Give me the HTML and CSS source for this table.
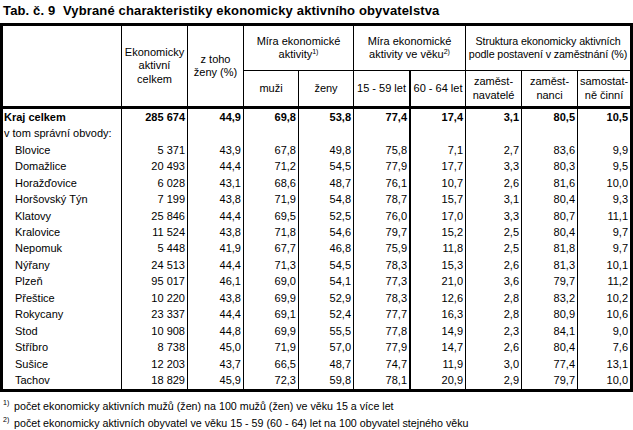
FILE: index.html
```html
<!DOCTYPE html>
<html lang="cs">
<head>
<meta charset="utf-8">
<link rel="stylesheet" href="styles.css">
</head>
<body>
<div class="title">Tab. č. 9&nbsp; Vybrané charakteristiky ekonomicky aktivního obyvatelstva</div>
<table class="tab">
  <colgroup>
    <col class="w0"><col class="w1"><col class="w2"><col class="w3"><col class="w4">
    <col class="w5"><col class="w6"><col class="w7"><col class="w8"><col class="w9">
  </colgroup>
  <thead>
    <tr class="hr1">
      <th rowspan="2" class="hb"></th>
      <th rowspan="2" class="hb">Ekonomicky<br>aktivní<br>celkem</th>
      <th rowspan="2" class="hb">z toho<br>ženy (%)</th>
      <th colspan="2">Míra ekonomické<br>aktivity<sup class="fn">1)</sup></th>
      <th colspan="2">Míra ekonomické<br>aktivity ve věku<sup class="fn">2)</sup></th>
      <th colspan="3" class="last tight">Struktura ekonomicky aktivních<br>podle postavení v zaměstnání (%)</th>
    </tr>
    <tr class="hr2">
      <th class="hb">muži</th>
      <th class="hb">ženy</th>
      <th class="hb thick">15 - 59 let</th>
      <th class="hb">60 - 64 let</th>
      <th class="hb">zaměst-<br>navatelé</th>
      <th class="hb">zaměst-<br>nanci</th>
      <th class="hb last">samostat-<br>ně činní</th>
    </tr>
  </thead>
  <tbody>
    <tr class="total"><td class="name">Kraj celkem</td><td>285 674</td><td>44,9</td><td>69,8</td><td>53,8</td><td class="thick">77,4</td><td>17,4</td><td>3,1</td><td>80,5</td><td class="last">10,5</td></tr>
    <tr><td class="name">v tom správní obvody:</td><td></td><td></td><td></td><td></td><td class="thick"></td><td></td><td></td><td></td><td class="last"></td></tr>
    <tr><td class="name sub">Blovice</td><td>5 371</td><td>43,9</td><td>67,8</td><td>49,8</td><td class="thick">75,8</td><td>7,1</td><td>2,7</td><td>83,6</td><td class="last">9,9</td></tr>
    <tr><td class="name sub">Domažlice</td><td>20 493</td><td>44,4</td><td>71,2</td><td>54,5</td><td class="thick">77,9</td><td>17,7</td><td>3,3</td><td>80,3</td><td class="last">9,5</td></tr>
    <tr><td class="name sub">Horažďovice</td><td>6 028</td><td>43,1</td><td>68,6</td><td>48,7</td><td class="thick">76,1</td><td>10,7</td><td>2,6</td><td>81,6</td><td class="last">10,0</td></tr>
    <tr><td class="name sub">Horšovský Týn</td><td>7 199</td><td>43,8</td><td>71,9</td><td>54,8</td><td class="thick">78,7</td><td>15,7</td><td>3,1</td><td>80,4</td><td class="last">9,3</td></tr>
    <tr><td class="name sub">Klatovy</td><td>25 846</td><td>44,4</td><td>69,5</td><td>52,5</td><td class="thick">76,0</td><td>17,0</td><td>3,3</td><td>80,7</td><td class="last">11,1</td></tr>
    <tr><td class="name sub">Kralovice</td><td>11 524</td><td>43,8</td><td>71,8</td><td>54,6</td><td class="thick">79,7</td><td>15,2</td><td>2,5</td><td>80,4</td><td class="last">9,7</td></tr>
    <tr><td class="name sub">Nepomuk</td><td>5 448</td><td>41,9</td><td>67,7</td><td>46,8</td><td class="thick">75,9</td><td>11,8</td><td>2,5</td><td>81,8</td><td class="last">9,7</td></tr>
    <tr><td class="name sub">Nýřany</td><td>24 513</td><td>44,4</td><td>71,3</td><td>54,5</td><td class="thick">78,3</td><td>15,3</td><td>2,6</td><td>81,3</td><td class="last">10,1</td></tr>
    <tr><td class="name sub">Plzeň</td><td>95 017</td><td>46,1</td><td>69,0</td><td>54,1</td><td class="thick">77,3</td><td>21,0</td><td>3,6</td><td>79,7</td><td class="last">11,2</td></tr>
    <tr><td class="name sub">Přeštice</td><td>10 220</td><td>43,8</td><td>69,9</td><td>52,9</td><td class="thick">78,3</td><td>12,6</td><td>2,8</td><td>83,2</td><td class="last">10,2</td></tr>
    <tr><td class="name sub">Rokycany</td><td>23 337</td><td>44,4</td><td>69,1</td><td>52,4</td><td class="thick">77,7</td><td>16,3</td><td>2,8</td><td>80,9</td><td class="last">10,6</td></tr>
    <tr><td class="name sub">Stod</td><td>10 908</td><td>44,8</td><td>69,9</td><td>55,5</td><td class="thick">77,8</td><td>14,9</td><td>2,3</td><td>84,1</td><td class="last">9,0</td></tr>
    <tr><td class="name sub">Stříbro</td><td>8 738</td><td>45,0</td><td>71,9</td><td>57,0</td><td class="thick">77,9</td><td>14,7</td><td>2,6</td><td>80,4</td><td class="last">7,6</td></tr>
    <tr><td class="name sub">Sušice</td><td>12 203</td><td>43,7</td><td>66,5</td><td>48,7</td><td class="thick">74,7</td><td>11,9</td><td>3,0</td><td>77,4</td><td class="last">13,1</td></tr>
    <tr><td class="name sub">Tachov</td><td>18 829</td><td>45,9</td><td>72,3</td><td>59,8</td><td class="thick">78,1</td><td>20,9</td><td>2,9</td><td>79,7</td><td class="last">10,0</td></tr>
  </tbody>
</table>
<div class="notes">
  <div class="note"><span class="mark">1)</span><span>počet ekonomicky aktivních mužů (žen) na 100 mužů (žen) ve věku 15 a více let</span></div>
  <div class="note"><span class="mark">2)</span><span>počet ekonomicky aktivních obyvatel ve věku 15 - 59 (60 - 64) let na 100 obyvatel stejného věku</span></div>
</div>
</body>
</html>
```
FILE: styles.css
```css
* { box-sizing: border-box; }
html, body { margin: 0; padding: 0; background: #fff; }
body {
  width: 633px;
  font-family: "Liberation Sans", Arial, sans-serif;
  font-size: 11px;
  color: #000;
}
.title {
  height: 23px;
  padding: 2px 0 0 3px;
  font-size: 13px;
  font-weight: bold;
  line-height: 18px;
  letter-spacing: 0.15px;
  white-space: nowrap;
}
.tab {
  width: 633px;
  table-layout: fixed;
  border-collapse: separate;
  border-spacing: 0;
  border: 3px solid #000;
}
.w0 { width: 119px; }
.w1 { width: 66px; }
.w2 { width: 56px; }
.w3 { width: 55px; }
.w4 { width: 55px; }
.w5 { width: 57px; }
.w6 { width: 55px; }
.w7 { width: 56px; }
.w8 { width: 56px; }
.w9 { width: 52px; }
.tab th {
  font-weight: normal;
  text-align: center;
  vertical-align: middle;
  line-height: 13.5px;
  padding: 0 1px;
  border-right: 1px solid #000;
  border-bottom: 1px solid #000;
  white-space: nowrap;
}
.tab th.tight {
  font-size: 10.7px;
  letter-spacing: -0.1px;
  padding: 0;
}
.tab th.hb { border-bottom: 3px solid #000; }
.hr1 { height: 45px; }
.hr2 { height: 38px; }
.fn {
  font-size: 7px;
  line-height: 0;
  vertical-align: 4px;
}
.tab td {
  height: 16.47px;
  padding: 0 2px 0 1px;
  text-align: right;
  vertical-align: middle;
  border-right: 1px solid #000;
  white-space: nowrap;
  line-height: 13px;
}
.tab .thick { border-right-width: 2px; }
.tab .last { border-right: none; }
.tab td.name { text-align: left; }
.tab td.sub { padding-left: 12px; }
.total td { font-weight: bold; }
.notes { padding-top: 6px; }
.note {
  display: flex;
  font-size: 10.7px;
  line-height: 17px;
  white-space: nowrap;
}
.mark {
  width: 14px;
  padding-left: 3px;
  font-size: 7px;
  line-height: 10px;
}
```
